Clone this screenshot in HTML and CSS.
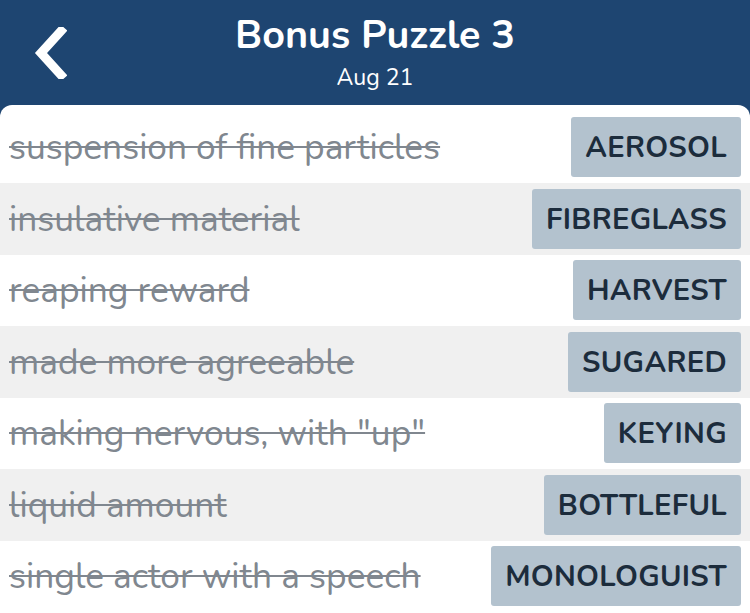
FILE: index.html
```html
<!DOCTYPE html>
<html>
<head>
<meta charset="utf-8">
<link rel="stylesheet" href="styles.css">
</head>
<body>
<div class="app">
  <header class="topbar">
    <button class="back" aria-label="Back">
      <svg width="34" height="52" viewBox="0 0 34 52"><path d="M28 4 L8 26 L28 48" fill="none" stroke="#fff" stroke-width="9" stroke-linecap="square" stroke-linejoin="miter"/></svg>
    </button>
    <div class="titles">
      <h1 class="title">Bonus Puzzle 3</h1>
      <div class="subtitle">Aug 21</div>
    </div>
  </header>
  <main class="card">
    <div class="row"><span class="clue">suspension of fine particles</span><span class="answer">AEROSOL</span></div>
    <div class="row alt"><span class="clue">insulative material</span><span class="answer">FIBREGLASS</span></div>
    <div class="row"><span class="clue">reaping reward</span><span class="answer">HARVEST</span></div>
    <div class="row alt"><span class="clue">made more agreeable</span><span class="answer">SUGARED</span></div>
    <div class="row"><span class="clue">making nervous, with "up"</span><span class="answer">KEYING</span></div>
    <div class="row alt"><span class="clue">liquid amount</span><span class="answer">BOTTLEFUL</span></div>
    <div class="row"><span class="clue">single actor with a speech</span><span class="answer">MONOLOGUIST</span></div>
  </main>
</div>
</body>
</html>
```
FILE: styles.css
```css
html, body {
  margin: 0;
  padding: 0;
  background: #ffffff;
  overflow: hidden;
}
.app {
  background: #1e4571;
  font-family: "Nunito", "Open Sans", sans-serif;
  min-height: 613px;
}
.topbar {
  height: 105px;
  display: flex;
  align-items: flex-start;
  justify-content: center;
  position: relative;
  color: #fff;
}
.back {
  position: absolute;
  left: 33px;
  top: 27px;
  background: none;
  border: 0;
  padding: 0;
  width: 34px;
  height: 52px;
}
.back svg { display: block; }
.titles {
  text-align: center;
  padding-top: 14px;
}
.title {
  margin: 0;
  font-size: 39.5px;
  font-weight: 700;
  line-height: 42px;
}
.subtitle {
  font-size: 23.1px;
  line-height: 28px;
  margin-top: 8px;
}
.card {
  background: #ffffff;
  border-radius: 12px 12px 0 0;
  padding-top: 6.5px;
  min-height: 508px;
}
.row {
  height: 71.5px;
  box-sizing: border-box;
  display: flex;
  align-items: center;
  justify-content: space-between;
  padding: 0 9px 0 9px;
}
.row.alt { background: #f0f0f0; }
.clue {
  color: #80878f;
  font-size: 35.3px;
  text-decoration: line-through;
  text-decoration-thickness: 2px;
  white-space: nowrap;
}
.answer {
  background: #b3c2ce;
  color: #1c2c3c;
  font-weight: 700;
  font-size: 29.2px;
  height: 60px;
  display: flex;
  align-items: center;
  padding: 0 14px;
  border-radius: 3px;
  letter-spacing: 0.3px;
}
```
